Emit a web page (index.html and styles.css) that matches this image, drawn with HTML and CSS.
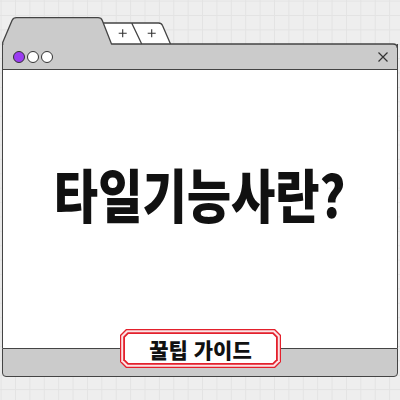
FILE: index.html
```html
<!DOCTYPE html>
<html lang="ko">
<head>
    <meta charset="UTF-8">
    <meta name="viewport" content="width=device-width, initial-scale=1.0">
    <title>타일기능사란?</title>
    <link rel="stylesheet" href="styles.css">
</head>
<body>
    <div class="window">
        <svg class="tabstrip" width="396" height="28" viewBox="0 0 396 28">
            <!-- small tabs -->
            <path class="tab-small" d="M100.5 6 L129.7 6 L139.7 27 L109.2 27 Z"/>
            <path class="tab-small" d="M129.7 6 L156.5 6 Q159.5 6 160.5 8.5 L168.5 27 L139.7 27 Z"/>
            <path class="tab-line" d="M100.5 6 L129.7 6 L139.7 27 M129.7 6 L156.5 6 Q159.5 6 160.5 8.5 L168.5 27"/>
            <path class="plus" d="M116.7 16.3 H124.7 M120.7 12.3 V20.3 M145.7 16.3 H153.7 M149.7 12.3 V20.3"/>
            <!-- main tab -->
            <path class="tab-main" d="M0.7 28 L0.7 25.5 L10 3.5 Q11.3 0.7 14.5 0.7 L96 0.7 Q99.2 0.7 100.3 3.5 L109.5 27 L109.5 28 Z"/>
            <path class="tab-line" d="M0.7 28 L0.7 25.5 L10 3.5 Q11.3 0.7 14.5 0.7 L96 0.7 Q99.2 0.7 100.3 3.5 L109.5 27 L391 27 Q395.3 27 395.3 31"/>
        </svg>
        <div class="toolbar">
            <div class="dots">
                <span class="dot dot-purple"></span>
                <span class="dot"></span>
                <span class="dot"></span>
            </div>
            <svg class="close" width="10" height="10" viewBox="0 0 10 10">
                <path d="M0.5 0.5 L9.5 9.5 M9.5 0.5 L0.5 9.5"/>
            </svg>
        </div>
        <div class="content">
            <h1 class="title"><span>타일기능사란?</span></h1>
        </div>
        <div class="footer">
            <div class="badge">
                <div class="badge-ring">
                    <div class="badge-line">
                        <div class="badge-text">꿀팁 가이드</div>
                    </div>
                </div>
            </div>
        </div>
    </div>
</body>
</html>
```

FILE: styles.css
```css
body {
    margin: 0;
    padding: 0;
    width: 400px;
    height: 400px;
    overflow: hidden;
    font-family: "Noto Sans CJK KR", "Noto Sans", sans-serif;
    background-color: #eeeeee;
    background-image:
        linear-gradient(to right, #e3e3e3 1px, transparent 1px),
        linear-gradient(to bottom, #e3e3e3 1px, transparent 1px);
    background-size: 14.4px 14.4px;
    background-position: 0.6px 0.6px;
}
.window {
    width: 396px;
    margin: 17px 2px 0 2px;
}
.tabstrip {
    display: block;
    overflow: visible;
    position: relative;
    z-index: 1;
    margin-bottom: -1px;
}
.tab-main {
    fill: #cbcbcb;
}
.tab-small {
    fill: #ffffff;
}
.tab-line {
    fill: none;
    stroke: #444;
    stroke-width: 1.3;
    stroke-linejoin: round;
}
.plus {
    stroke: #333;
    stroke-width: 1.1;
}
.toolbar {
    height: 25px;
    background: #cbcbcb;
    border-left: 1.3px solid #444;
    border-right: 1.3px solid #444;
    border-bottom: 1.3px solid #444;
    display: flex;
    align-items: center;
    justify-content: space-between;
    padding: 0 9px 0 10px;
}
.dots {
    display: flex;
    gap: 1.8px;
}
.dot {
    width: 10px;
    height: 10px;
    border-radius: 50%;
    border: 1px solid #333;
    background: #fff;
}
.dot-purple {
    background: #9b3cf2;
}
.close path {
    stroke: #333;
    stroke-width: 1.2;
}
.content {
    height: 278px;
    background: #fff;
    border-left: 1.3px solid #444;
    border-right: 1.3px solid #444;
    display: flex;
    align-items: center;
    justify-content: center;
    padding-bottom: 32px;
    box-sizing: border-box;
}
.title {
    margin: 0;
    font-size: 58px;
    font-weight: 900;
    color: #111;
    line-height: 1;
    white-space: nowrap;
}
.title span {
    display: inline-block;
    transform: scaleX(0.83);
}
.footer {
    position: relative;
    height: 27px;
    background: #cbcbcb;
    border: 1.3px solid #444;
    border-radius: 0 0 4px 4px;
}
.badge {
    position: absolute;
    left: 117px;
    top: -20px;
    width: 161px;
    height: 39px;
    box-sizing: border-box;
    padding: 1.2px;
    background: #e3202c;
    clip-path: polygon(6px 0, calc(100% - 6px) 0, 100% 6px, 100% calc(100% - 6px), calc(100% - 6px) 100%, 6px 100%, 0 calc(100% - 6px), 0 6px);
}
.badge-ring {
    height: 100%;
    box-sizing: border-box;
    padding: 2px;
    background: #fbe4e6;
    clip-path: polygon(5.5px 0, calc(100% - 5.5px) 0, 100% 5.5px, 100% calc(100% - 5.5px), calc(100% - 5.5px) 100%, 5.5px 100%, 0 calc(100% - 5.5px), 0 5.5px);
}
.badge-line {
    height: 100%;
    box-sizing: border-box;
    padding: 1.5px;
    background: #e3202c;
    clip-path: polygon(4.5px 0, calc(100% - 4.5px) 0, 100% 4.5px, 100% calc(100% - 4.5px), calc(100% - 4.5px) 100%, 4.5px 100%, 0 calc(100% - 4.5px), 0 4.5px);
}
.badge-text {
    height: 100%;
    background: #fff;
    display: flex;
    align-items: center;
    justify-content: center;
    font-size: 21px;
    font-weight: 900;
    color: #111;
    transform: none;
    clip-path: polygon(4px 0, calc(100% - 4px) 0, 100% 4px, 100% calc(100% - 4px), calc(100% - 4px) 100%, 4px 100%, 0 calc(100% - 4px), 0 4px);
}
```
